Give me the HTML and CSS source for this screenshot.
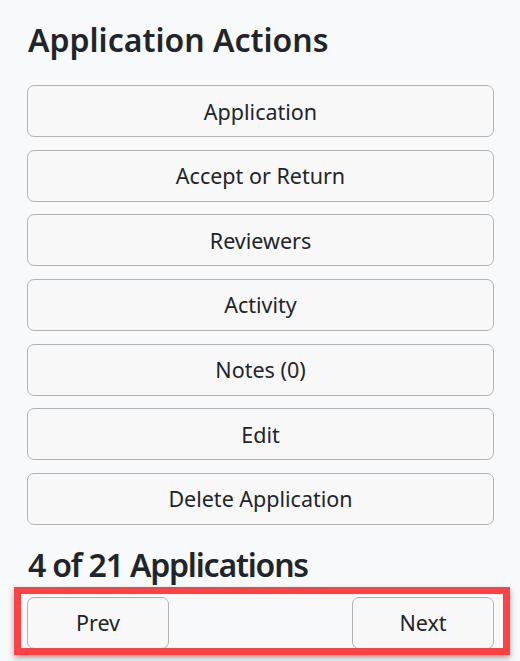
FILE: index.html
```html
<!DOCTYPE html>
<html lang="en">
<head>
  <meta charset="UTF-8">
  <meta name="viewport" content="width=device-width, initial-scale=1.0">
  <title>Application Actions</title>
  <link rel="stylesheet" href="styles.css">
</head>
<body>
  <div class="panel">
    <h3 class="panel-title">Application Actions</h3>

    <div class="actions">
      <button class="btn">Application</button>
      <button class="btn">Accept or Return</button>
      <button class="btn">Reviewers</button>
      <button class="btn">Activity</button>
      <button class="btn">Notes (0)</button>
      <button class="btn">Edit</button>
      <button class="btn">Delete Application</button>
    </div>

    <h3 class="panel-title count">4 of 21 Applications</h3>

    <!-- Paginacion -->
    <div class="pager">
      <button class="btn pager-btn">Prev</button>
      <button class="btn pager-btn">Next</button>
      <div class="highlight"></div>
    </div>
  </div>
</body>
</html>
```

FILE: styles.css
```css
html, body {
  margin: 0;
  height: 100%;
  overflow: hidden;
}
body {
  font-family: "Noto Sans", "Open Sans", sans-serif;
  background-color: #f8f9fa;
  color: #212529;
}
.panel {
  padding: 21px 26px 0 27px;
}
.panel-title {
  margin: 0 0 26px 1px;
  font-size: 32px;
  font-weight: 600;
  line-height: 38px;
}
.actions {
  display: flex;
  flex-direction: column;
  gap: 12.67px;
}
.btn {
  height: 52px;
  padding: 0 16px;
  font-family: inherit;
  font-size: 21.5px;
  color: #212529;
  background-color: #f8f8f8;
  border: 1px solid #b3b3b3;
  border-radius: 7px;
  cursor: pointer;
}
.count {
  margin-top: 21px;
  margin-bottom: 13px;
  letter-spacing: -1.2px;
}
.pager {
  position: relative;
  display: flex;
  justify-content: space-between;
}
.pager-btn {
  width: 142px;
}
.highlight {
  position: absolute;
  top: -10px;
  left: -13px;
  right: -16px;
  bottom: -6px;
  border: 7px solid #fd4245;
  box-shadow: 0 3px 6px rgba(0, 0, 0, 0.35);
}
```
